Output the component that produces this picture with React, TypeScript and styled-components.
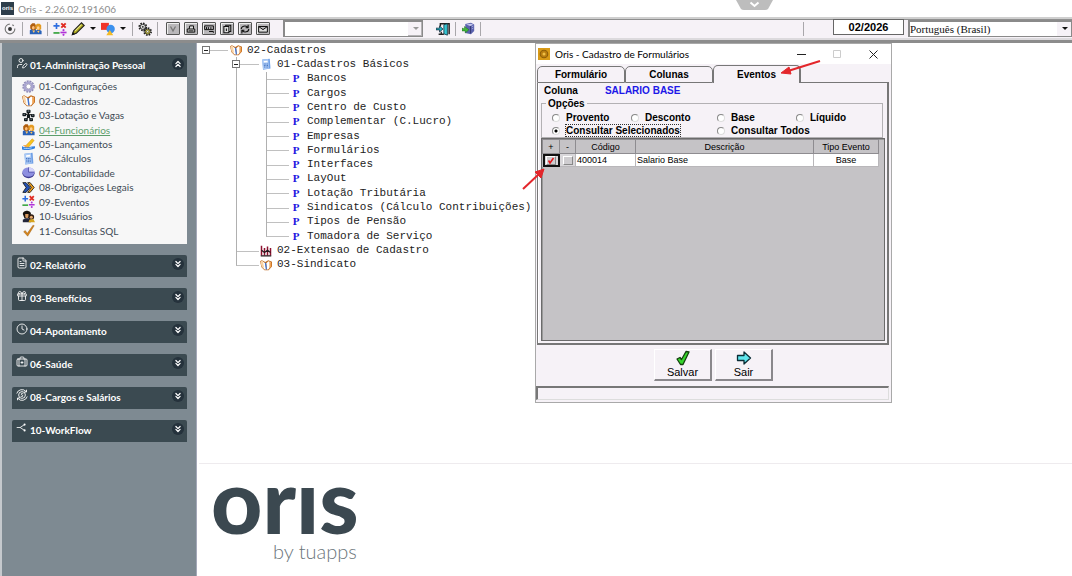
import React from "react";
import styled, { createGlobalStyle, css } from "styled-components";
import {
  BriefcaseMedical, ChevronsDown, ChevronsUp, Clock, FileText, Gift, UserPen,
} from "lucide-react";

const sans = `"Liberation Sans", Arial, sans-serif`;
const ui = `Lato, "Open Sans", sans-serif`;
const face = "#f6f2f7";

const GlobalStyle = createGlobalStyle`
  * { box-sizing: border-box; }
  html, body, #root { height: 100%; }
  body { margin: 0; background: #fff; font-family: ${sans}; overflow: hidden; }
  button { font: inherit; color: inherit; padding: 0; }
`;

/* ---------- icons ---------- */

type IconName =
  | "gear" | "book" | "org" | "people" | "hand" | "calc" | "pie" | "fast"
  | "math" | "users" | "tick" | "target" | "pencil" | "shapes" | "gears"
  | "door" | "globe" | "factory" | "salary" | "flow" | "save" | "leave"
  | "check" | "coin";

const drawings: Record<IconName, React.ReactNode> = {
  gear: (
    <>
      <circle cx="8" cy="8" r="6.6" fill="none" stroke="#8c88b4" strokeWidth="2" strokeDasharray="2.4 1.1" />
      <circle cx="8" cy="8" r="4.8" fill="none" stroke="#a9a5d0" strokeWidth="3" />
      <circle cx="8" cy="8" r="3" fill="#fff" stroke="#77739c" strokeWidth=".7" />
    </>
  ),
  book: (
    <>
      <path d="M0 3 2.500 1.500 7 4l4-2.500 5 2v6.500l-4.500 5H6L2 11z" fill="#c06a1c" />
      <path d="M.8 3.500 2.800 2.500 7 5.500 8.500 14H6.200L2.800 10.500z" fill="#fff" />
      <path d="M.8 3.500 2.800 2.500l1.200 1 1.500 8.500L2.800 10.500z" fill="#f9d3a4" />
      <path d="M8.500 5.500 11 3l3.500 1.200V9.500L11 14H9z" fill="#fff" />
      <path d="M12.500 3.500l2.500 1V10l-2.500 2.500z" fill="#f0a354" />
      <path d="M7.300 5l1.200 9" stroke="#3f73d2" strokeWidth="1.700" />
    </>
  ),
  org: (
    <>
      <path d="M8 4v5M8 6 3 7M8 6l5 2M8 9l-3 4M8 9l3 4" stroke="#111" strokeWidth="1.300" />
      <g fill="#10181d">
        <rect x="5.500" y="1" width="5" height="4" rx="1" /><rect x="0.500" y="5" width="4.500" height="4" rx="1" />
        <rect x="11" y="6" width="4.500" height="4" rx="1" /><rect x="6" y="7" width="4" height="3.500" rx="1" />
        <rect x="2.500" y="11" width="4.500" height="4" rx="1" /><rect x="9" y="11" width="4.500" height="4" rx="1" />
      </g>
      <path d="M7 2.500h2M2 6.500h1.500M12.500 7.500H14M4 12.500h1.500M10.500 12.500H12" stroke="#cfd8e0" strokeWidth=".9" />
    </>
  ),
  people: (
    <>
      <path d="M1 15V10l3-2h4l2 7zM8 15l1-5 3-1 3.500 2v4z" fill="#2a62b8" />
      <path d="M1.500 8V4L4 1.500h3L8.500 4V9L5 10.500z" fill="#b05e10" />
      <path d="M8 8V4l2-2h3l2 2v5l-3 1.500z" fill="#e39a23" />
      <ellipse cx="5.300" cy="7" rx="1.700" ry="2.200" fill="#ffc07a" /><ellipse cx="11.300" cy="7.300" rx="1.700" ry="2.200" fill="#ffcf90" />
      <path d="M4 10.500l2 3 1.500-3zM10 11l1.500 2.500L13 11z" fill="#ffc766" />
    </>
  ),
  hand: (
    <>
      <path d="M0 10c4 2 6 1 16 0v2.500c-4 2-11 3-16 1.500z" fill="#2f7fe0" />
      <path d="M2 12.500c3 .8 7 .5 10-.5" fill="none" stroke="#bfe0ff" />
      <path d="M5 9 12.500 1l2.500 2-7 8.500z" fill="#f7c41c" stroke="#c57f10" strokeWidth=".5" />
      <path d="M1 9l4-.5L8 11l-3 .8z" fill="#f3a64a" />
    </>
  ),
  calc: (
    <>
      <path d="M3 2l10-1 1 13-10 1.500z" fill="#6e9fe6" />
      <path d="M3 2l8-.8 1 12.800-8 1z" fill="#a9c9f5" />
      <path d="M5 4l5-.5.2 2L5.200 6z" fill="#fff" />
      <path d="M5 8h5.500M5.200 10h5.500M5.400 12h5.500" stroke="#3767b8" strokeWidth="1.100" strokeDasharray="1.300 .8" />
    </>
  ),
  pie: (
    <>
      <ellipse cx="8" cy="9" rx="7.500" ry="6" fill="#3d3a8f" /><ellipse cx="8" cy="7.500" rx="7.500" ry="5.800" fill="#8d8fe0" />
      <path d="M8 7.500V1.700a7.500 5.800 0 0 1 7.500 5.800z" fill="#d4d5fa" />
      <path d="M8 1.700v5.800h7" fill="none" stroke="#4340a0" strokeWidth=".9" />
    </>
  ),
  fast: (
    <>
      <path d="M1 2h4l5 6-5 6H1l4-6z" fill="#2452b5" stroke="#111" />
      <path d="M7 2h3l5 6-5 6H7l4.500-6z" fill="#f5a31b" stroke="#111" />
    </>
  ),
  math: (
    <>
      <path d="M4 1v7M.5 4.500h7" stroke="#2e6de0" strokeWidth="1.900" />
      <path d="M9.500 1.500l5 5M14.500 1.500l-5 5" stroke="#e02a20" strokeWidth="2.200" />
      <path d="M.5 12.500h7" stroke="#33a13a" strokeWidth="1.900" />
      <path d="M8.500 12h7" stroke="#b030d8" strokeWidth="1.900" /><circle cx="12" cy="9.300" r="1.200" fill="#b030d8" /><circle cx="12" cy="14.700" r="1.200" fill="#b030d8" />
    </>
  ),
  users: (
    <>
      <path d="M1 5c0-3 3-4 5-4s5 1 5 4l-2 5H3z" fill="#17110c" />
      <path d="M4 5h4v4l-2 1-2-1z" fill="#d79a62" />
      <path d="M1 15v-3l3-2h4l3 2v3z" fill="#22253a" />
      <circle cx="11.500" cy="8.500" r="3.400" fill="#2c1a10" /><circle cx="11.500" cy="9" r="1.900" fill="#e3a86d" />
      <path d="M8 15l1-3 5-1 2 4z" fill="#d5a31e" />
    </>
  ),
  tick: <path d="M2 9.500 4 8l2.500 3.500L13.500 1.500 15 2 7 15z" fill="#d8871e" stroke="#8e5410" strokeWidth=".5" />,
  target: (
    <>
      <circle cx="8" cy="8" r="5.500" fill="none" stroke="#777" strokeWidth="1.300" strokeDasharray="25 3 2 3" />
      <circle cx="8" cy="8" r="2.200" fill="#333" />
    </>
  ),
  pencil: (
    <>
      <path d="M1.500 14.500 3 10l9-9 3.200 3-9.200 9z" fill="#a9a51c" stroke="#222" strokeWidth="1.300" />
      <path d="M4.500 10.500 12 3" stroke="#efe98a" strokeWidth="1.200" /><path d="M1 15l1-3.500L4.500 14z" fill="#111" />
    </>
  ),
  shapes: (
    <>
      <rect x="0" y="1" width="9" height="8" fill="#f0342a" /><circle cx="11" cy="8" r="4.800" fill="#3b90ee" />
      <path d="M6 15l4-6 4 6z" fill="#f4bb26" />
    </>
  ),
  gears: (
    <>
      <circle cx="5.500" cy="5.500" r="4" fill="none" stroke="#222" strokeWidth="2" strokeDasharray="1.800 1.300" />
      <circle cx="5.500" cy="5.500" r="3" fill="#ddd" stroke="#222" /><circle cx="5.500" cy="5.500" r="1" fill="#222" />
      <circle cx="11" cy="11" r="4" fill="none" stroke="#222" strokeWidth="2" strokeDasharray="1.800 1.300" />
      <circle cx="11" cy="11" r="3" fill="#d8cc3a" stroke="#222" /><circle cx="11" cy="11" r="1.200" fill="#fff" stroke="#222" strokeWidth=".6" />
    </>
  ),
  door: (
    <>
      <path d="M5 5V2h10v12" fill="none" stroke="#222" strokeWidth="1.700" /><path d="M9 3l4-1v13l-4-1.500z" fill="#35c8d6" stroke="#163c48" />
      <path d="M0 7h4V4.500L8 8l-4 3.500V9H0z" fill="#1ab3c4" stroke="#123" strokeWidth=".8" /><path d="M3 14h6M6 11v3" stroke="#222" strokeWidth="1.500" />
    </>
  ),
  globe: (
    <>
      <path d="M4 2.500 11 1l4 2v8l-4 4-7-1.500z" fill="#5b62ae" /><path d="M5 3l6-1 3 1.500-4 1.500z" fill="#c5c9ec" />
      <path d="M10.500 5v9" stroke="#2c2f68" /><path d="M12 6l2-1M12 8.500l2-1" stroke="#a9aee0" />
      <path d="M0 7.500l3 1V5.500L8.500 9.500 4 13.500v-2.500L0 11z" fill="#42b83c" stroke="#1e6a1e" strokeWidth=".6" />
    </>
  ),
  factory: (
    <>
      <path d="M2 1v13M6 4v10M10 2v12M14 4v10" stroke="#8e1230" strokeWidth="2" />
      <path d="M1 14.500h14M2 7l4 3 4-3 4 3" fill="none" stroke="#22181c" strokeWidth="1.500" />
    </>
  ),
  salary: (
    <g fill="none" stroke="currentColor" strokeWidth="1.200">
      <circle cx="8" cy="8" r="4.500" /><path d="M1 6a7.200 7.200 0 0 1 12.500-2.500M15 10A7.200 7.200 0 0 1 2.500 12.500M14 1v3h-3M2 15v-3h3" />
      <path d="M9.800 6.300c-3-1.500-4 1-1.800 1.700s1.200 3-1.800 1.700" />
    </g>
  ),
  flow: (
    <>
      <path d="M1 8h5l6-4M6 8l6 4" fill="none" stroke="currentColor" strokeWidth="1.200" />
      <circle cx="12.500" cy="3.800" r="1.500" fill="currentColor" /><circle cx="12.500" cy="12.200" r="1.500" fill="currentColor" />
    </>
  ),
  save: <path d="M2 9 5 7.500l1.500 2L11 1.500l3 .5L8 14.500H5.500z" fill="#35d62c" stroke="#14400f" strokeWidth="1.300" strokeLinejoin="round" />,
  leave: <path d="M1.500 5.500h6.500V2L14.500 8 8 14v-3.500H1.500z" fill="#5fe6ee" stroke="#0b2d36" strokeWidth="1.300" strokeLinejoin="round" />,
  check: <path d="M3 7l3 5 7-10" fill="none" stroke="#e3161b" strokeWidth="3" />,
  coin: (
    <>
      <rect width="16" height="16" fill="#d89a17" /><circle cx="8" cy="8" r="5" fill="#b87d10" stroke="#8e5e08" strokeWidth="1.500" /><circle cx="8" cy="8" r="2" fill="#f0bf45" />
    </>
  ),
};

const Svg = styled.svg<{ $size: number }>`
  display: block;
  flex: none;
  width: ${(p) => p.$size}px;
  height: ${(p) => p.$size}px;
`;
const Icon = ({ name, size = 13 }: { name: IconName; size?: number }) => (
  <Svg viewBox="0 0 16 16" $size={size} aria-hidden="true">{drawings[name]}</Svg>
);

/* ---------- application frame ---------- */

const Shell = styled.div`
  display: flex;
  flex-direction: column;
  min-height: 100vh;
`;
const TitleBar = styled.header`
  position: relative;
  display: flex;
  align-items: center;
  gap: 4px;
  height: 17px;
  padding-left: 1px;
  font: 10px ${ui};
  color: #8c8c8c;
`;
const AppBadge = styled.span`
  width: 13px;
  height: 13px;
  background: #2d3e4a;
  color: #fff;
  font: bold 6px/12px ${sans};
  text-align: center;
`;
const PullTab = styled.button`
  position: absolute;
  top: 0;
  left: 736px;
  width: 37px;
  height: 11px;
  border: 0;
  background: none;
`;

const Toolbar = styled.div`
  display: flex;
  align-items: center;
  gap: 2px;
  height: 26px;
  padding: 1px 0 3px 2px;
  border-top: 2px solid #cfcfcf;
  border-bottom: 3px solid #8c8c8c;
  background: ${face};
  box-shadow: inset 0 1px #8f8f8f, inset 0 -2px #dcdadd;
`;
const ToolButton = styled.button<{ $raised?: boolean }>`
  display: grid;
  place-items: center;
  flex: none;
  width: 16px;
  height: 16px;
  border: 0;
  background: none;
  ${(p) => p.$raised && css`
    width: 14px;
    height: 13px;
    margin: 0 1px;
    border: 1px solid #555;
    border-radius: 1px;
    background: #b9b7ba;
    box-shadow: inset 1px 1px #eee;
  `}
`;
const MenuButton = styled.button`
  width: 10px;
  height: 16px;
  display: grid;
  place-items: center;
  border: 0;
  background: none;
  &::after {
    content: "";
    border: 3px solid transparent;
    border-top-color: #111;
    border-bottom: 0;
  }
`;
const Divider = styled.span`
  flex: none;
  width: 1px;
  height: 14px;
  margin: 0 2px;
  background: #a9a7ab;
`;
const RaisedGroup = styled.div`
  display: flex;
  gap: 2px;
  margin: 0 10px 0 3px;
`;
const ExitGroup = styled.div`
  margin-left: 10px;
`;
const Spacer = styled.span`
  flex: 1;
`;
const Combo = styled.div<{ $width: number; $muted?: boolean }>`
  position: relative;
  flex: none;
  width: ${(p) => p.$width}px;
  height: 17px;
  border: 1px solid #8a8a8a;
  border-width: 2px 1px 1px 2px;
  background: #fff;
  select {
    display: block;
    width: 100%;
    height: 100%;
    padding: 0;
    border: 0;
    outline: 0;
    appearance: none;
    background: none;
    color: #111;
    font: 11px "Liberation Serif", "Times New Roman", serif;
  }
  &::before {
    content: "";
    position: absolute;
    inset: 0 0 0 auto;
    width: 13px;
    background: ${face};
    border: 1px solid ${(p) => (p.$muted ? "#b5b3b6" : face)};
    border-width: 0 1px 1px 0;
    pointer-events: none;
  }
  &::after {
    content: "";
    position: absolute;
    right: 3px;
    top: 5px;
    border: 3px solid transparent;
    border-top-color: ${(p) => (p.$muted ? "#999" : "#111")};
    border-bottom: 0;
    pointer-events: none;
  }
`;
const Period = styled.input`
  width: 71px;
  height: 16px;
  margin: 0 2px 3px 25px;
  padding: 0;
  border: 1px solid #666;
  background: #fff;
  color: #000;
  text-align: center;
  font: bold 11px ${sans};
`;

const Workspace = styled.div`
  display: flex;
  flex: 1;
`;

/* ---------- sidebar ---------- */

const Sidebar = styled.nav`
  display: flex;
  flex-direction: column;
  flex: none;
  gap: 11px;
  width: 197px;
  padding: 12px 9px 12px 10px;
  border-left: 2px solid #c5c9cd;
  border-right: 1px solid #a4a8b8;
  background: #7e8a92;
`;
const Section = styled.section``;
const SectionButton = styled.button`
  display: flex;
  align-items: center;
  width: 100%;
  height: 22px;
  padding: 0 3px 0 4px;
  border: 0;
  border-radius: 2px 2px 0 0;
  background: #3b4a51;
  color: #fff;
  text-align: left;
  font: bold 10px ${ui};
`;
const SectionMark = styled.span`
  display: flex;
  width: 14px;
  height: 20px;
  padding-top: 1px;
`;
const SectionTitle = styled.span`
  flex: 1;
  padding-bottom: 2px;
`;
const Toggle = styled.span`
  display: grid;
  place-items: center;
  width: 12px;
  height: 12px;
  margin-bottom: 4px;
  border-radius: 50%;
  background: #25323c;
`;
const Items = styled.ul`
  display: grid;
  grid-auto-rows: 1fr;
  height: 167px;
  margin: 0;
  padding: 2px 0 6px 10px;
  list-style: none;
  background: #f7f7f7;
`;
const Item = styled.li`
  display: flex;
  align-items: center;
  gap: 4px;
`;
const ItemLink = styled.a<{ $active?: boolean }>`
  color: ${(p) => (p.$active ? "#5d9e6c" : "#3d4a55")};
  text-decoration: ${(p) => (p.$active ? "underline" : "none")};
  font: 10px/14px ${ui};
`;

const sidebarItems: [IconName, string][] = [
  ["gear", "01-Configurações"], ["book", "02-Cadastros"], ["org", "03-Lotação e Vagas"],
  ["people", "04-Funcionários"], ["hand", "05-Lançamentos"], ["calc", "06-Cálculos"],
  ["pie", "07-Contabilidade"], ["fast", "08-Obrigações Legais"], ["math", "09-Eventos"],
  ["users", "10-Usuários"], ["tick", "11-Consultas SQL"],
];
const thin = { size: 12, strokeWidth: 1.7 };
const closedSections: [React.ReactNode, string][] = [
  [<FileText {...thin} />, "02-Relatório"], [<Gift {...thin} />, "03-Benefícios"],
  [<Clock {...thin} />, "04-Apontamento"], [<BriefcaseMedical {...thin} />, "06-Saúde"],
  [<Icon name="salary" size={12} />, "08-Cargos e Salários"], [<Icon name="flow" size={11} />, "10-WorkFlow"],
];
const SectionHeader = ({ mark, title, open }: { mark: React.ReactNode; title: string; open?: boolean }) => (
  <SectionButton aria-expanded={!!open}>
    <SectionMark>{mark}</SectionMark>
    <SectionTitle>{title}</SectionTitle>
    <Toggle>{open ? <ChevronsUp size={10} strokeWidth={3} /> : <ChevronsDown size={10} strokeWidth={3} />}</Toggle>
  </SectionButton>
);

/* ---------- tree ---------- */

const Main = styled.main`
  position: relative;
  display: flex;
  flex-direction: column;
  flex: 1;
  min-width: 0;
`;
const Tree = styled.ul`
  display: grid;
  grid-auto-rows: 1fr;
  height: 229px;
  margin: 0 0 191px;
  padding: 0 0 0 9px;
  list-style: none;
`;
const TreeRow = styled.li`
  display: flex;
  align-items: center;
  color: #222;
  font: 11px/13px "Liberation Mono", "Courier New", monospace;
  white-space: pre;
`;
const Indent = styled.span<{ $line?: boolean }>`
  align-self: stretch;
  width: 30px;
  border-left: 1px solid #b0b0b0;
`;
const Branch = styled.span<{ $shape: "root" | "mid" | "last" }>`
  position: relative;
  align-self: stretch;
  width: 24px;
  &::before, &::after {
    content: "";
    position: absolute;
    left: 0;
    top: 0;
  }
  &::before {
    width: 22px;
    height: 50%;
    border-bottom: 1px solid #c0c0c0;
    ${(p) => p.$shape !== "root" && "border-left: 1px solid #b0b0b0;"}
  }
  &::after {
    top: 50%;
    height: 50%;
    ${(p) => p.$shape === "mid" && "border-left: 1px solid #b0b0b0;"}
  }
`;
const Blank = styled.span`
  width: 30px;
`;
const Expander = styled.button`
  position: absolute;
  z-index: 1;
  left: -4px;
  top: 3px;
  width: 8px;
  height: 8px;
  border: 1px solid #777;
  background: linear-gradient(#222, #222) center / 4px 1px no-repeat #fff;
`;
const NodeIcon = styled.span`
  display: grid;
  place-items: center;
  width: 12px;
  margin-right: 5px;
`;
const ProgramMark = styled.b`
  color: #2014e0;
  font: bold 11px/13px "Liberation Serif", serif;
`;

type Node = {
  label: string;
  level: 0 | 1 | 2;
  icon?: IconName;
  last?: boolean;
  open?: boolean;
};
const programs = [
  "Bancos", "Cargos", "Centro de Custo", "Complementar (C.Lucro)", "Empresas", "Formulários", "Interfaces",
  "LayOut", "Lotação Tributária", "Sindicatos (Cálculo Contribuições)", "Tipos de Pensão", "Tomadora de Serviço",
];
const nodes: Node[] = [
  { label: "02-Cadastros", level: 0, icon: "book", open: true },
  { label: "01-Cadastros Básicos", level: 1, icon: "calc", open: true },
  ...programs.map((label, i): Node => ({ label, level: 2, last: i === programs.length - 1 })),
  { label: "02-Extensao de Cadastro", level: 1, icon: "factory" },
  { label: "03-Sindicato", level: 1, icon: "book", last: true },
];

const Brand = styled.footer`
  flex: 1;
  margin-left: 2px;
  padding: 0 12px;
  border-top: 1px solid #eeebee;
  color: #3b4850;
`;
const Wordmark = styled.div`
  font: 900 89px/72px Lato, sans-serif;
`;
const Byline = styled.div`
  padding-left: 62px;
  color: #6c757b;
  font: 300 20px/30px Lato, sans-serif;
`;

/* ---------- dialog ---------- */

const Dialog = styled.section`
  position: absolute;
  z-index: 2;
  left: 338px;
  top: 0;
  display: flex;
  flex-direction: column;
  width: 357px;
  border: 1px solid #a9a9a9;
  background: ${face};
  color: #000;
`;
const DialogBar = styled.header`
  display: flex;
  align-items: center;
  height: 20px;
  padding: 0 8px 0 2px;
  background: #fff;
  font: 10px ${ui};
  h2 { flex: 1; margin: 0 0 0 5px; font: inherit; }
`;
const WindowButton = styled.button<{ $dim?: boolean }>`
  display: grid;
  place-items: center;
  width: 20px;
  height: 18px;
  margin-left: 16px;
  border: 0;
  background: none;
  color: ${(p) => (p.$dim ? "#ccc" : "#222")};
`;
const Tabs = styled.div`
  display: flex;
  align-items: flex-end;
  height: 19px;
  padding: 1px 0 0 1px;
`;
const Tab = styled.button<{ $active?: boolean }>`
  width: 88px;
  height: ${(p) => (p.$active ? 18 : 17)}px;
  border: 1px solid #777;
  border-right-width: ${(p) => (p.$active ? 2 : 1)}px;
  border-bottom: ${(p) => (p.$active ? 0 : 1)}px solid #777;
  border-radius: 5px 5px 0 0;
  background: ${face};
  font: bold 10px ${sans};
`;
const TabRule = styled.span`
  flex: 1;
  margin-right: 2px;
  border-bottom: 1px solid #777;
`;
const Panel = styled.div`
  margin: 0 2px 0 1px;
  padding: 2px 2px 2px 3px;
  border: solid #777;
  border-width: 0 2px 2px 1px;
  box-shadow: inset 1px 0 #fff;
`;
const ColumnLine = styled.div`
  display: flex;
  gap: 27px;
  padding-left: 3px;
  font: bold 10px/12px ${sans};
  strong { color: #2018e8; }
`;
const Options = styled.fieldset`
  display: grid;
  grid-template-columns: 79px 86px 79px 1fr;
  grid-auto-rows: 13px;
  margin: 2px 2px 0 0;
  padding: 3px 2px 0 10px;
  border: 1px solid #b3b1b4;
  font: bold 10px/13px ${sans};
  legend { height: 9px; padding: 0 2px; margin-left: -6px; line-height: 9px; }
`;
const Option = styled.label<{ $wide?: boolean; $focused?: boolean }>`
  display: flex;
  align-items: center;
  gap: 6px;
  grid-column: span ${(p) => (p.$wide ? 2 : 1)};
  white-space: nowrap;
  input {
    appearance: none;
    width: 8px;
    height: 8px;
    margin: 0;
    border: 1px solid #888;
    border-right-color: #ddd;
    border-bottom-color: #ddd;
    border-radius: 50%;
    background: #fff;
  }
  input:checked { background: radial-gradient(#000 1px, #fff 2px); }
  span { line-height: 11px; ${(p) => p.$focused && "outline: 1px dotted #333;"} }
`;
const GridArea = styled.div`
  height: 203px;
  border: 1px solid #6b6b6b;
  background: #c5c3c6;
  box-shadow: inset 1px 1px #999;
`;
const Grid = styled.table`
  width: 336px;
  border-collapse: collapse;
  table-layout: fixed;
  font: 9px/12px ${sans};
  th { height: 14px; padding: 0; border: 1px solid #8e8c90; background: #c5c3c6; font-weight: normal; }
  td { height: 13px; padding: 0 1px; border: 1px solid #b9b7ba; background: #fff; }
`;
const CheckCell = styled.td<{ $focused?: boolean }>`
  && { background: #d9d7da; ${(p) => p.$focused && "outline: 2px solid #111; outline-offset: -2px;"} }
`;
const Box = styled.label`
  position: relative;
  display: grid;
  place-items: center;
  width: 10px;
  height: 9px;
  margin: 0 auto;
  border: 1px solid #888;
  border-top-color: #fff;
  border-left-color: #fff;
  background: #cfcdd0;
  input { position: absolute; inset: 0; margin: 0; width: 100%; height: 100%; opacity: 0; }
`;
const Actions = styled.div`
  display: flex;
  justify-content: center;
  gap: 3px;
  padding: 4px 0 5px;
`;
const Action = styled.button`
  display: flex;
  flex-direction: column;
  align-items: center;
  width: 58px;
  height: 32px;
  border: 1px solid #fff;
  border-right: 2px solid #8a888c;
  border-bottom: 2px solid #8a888c;
  background: ${face};
  font: 11px/13px ${sans};
`;
const StatusBar = styled.div`
  height: 14px;
  margin: 0 2px 2px 0;
  border: 1px solid #ddd;
  border-top: 2px solid #777;
  border-left: 2px solid #777;
`;
const Pointer = styled.svg`
  position: absolute;
  z-index: 3;
  left: 324px;
  top: 14px;
  width: 310px;
  height: 140px;
  pointer-events: none;
`;

const toolGlyphs = [
  <path d="M4 4l4 7 4-7" fill="none" stroke="#777" strokeWidth="2" />,
  <path d="M2 8h12v5H2zM5 8l1-5h6v5M4 11h8" fill="#ddd" stroke="#111" strokeWidth="1.600" />,
  <path d="M1 3h14v6H1zM4 5v3M7 5v3M11 5v3M8 12h7v2" fill="none" stroke="#111" strokeWidth="1.600" />,
  <path d="M3 4h8v10H3zM6 4V2h8v10h-3M7 7v4" fill="#ddd" stroke="#111" strokeWidth="1.700" />,
  <path d="M2 8c0-5 7-6 10-3M14 8c0 5-7 6-10 3M13 1v5H9M3 15v-5h4" fill="none" stroke="#111" strokeWidth="1.800" />,
  <path d="M1 4h14v9H1zM1 4l7 5 7-5" fill="#ddd" stroke="#111" strokeWidth="1.600" />,
];
const toolNames = ["Filtro", "Imprimir", "Teclado", "Copiar", "Atualizar", "Mensagem"];

export default function App() {
  return (
    <Shell>
      <GlobalStyle />
      <TitleBar>
        <AppBadge>oris</AppBadge>
        <span>Oris - 2.26.02.191606</span>
        <PullTab aria-label="Expandir">
          <svg width="37" height="11" viewBox="0 0 37 11">
            <path d="M0 0h37l-5 9q-1 1-3 1H8q-2 0-3-1z" fill="#bdbdbd" />
            <path d="M14.500 2.500l4 3.500 4-3.500" fill="none" stroke="#fff" strokeWidth="2" />
          </svg>
        </PullTab>
      </TitleBar>

      <Toolbar>
        <ToolButton aria-label="Início"><Icon name="target" size={14} /></ToolButton>
        <Divider />
        <ToolButton aria-label="Funcionários"><Icon name="people" /></ToolButton>
        <Divider />
        <ToolButton aria-label="Eventos"><Icon name="math" size={14} /></ToolButton>
        <ToolButton aria-label="Editar"><Icon name="pencil" size={14} /></ToolButton>
        <MenuButton aria-label="Opções de edição" />
        <ToolButton aria-label="Formas"><Icon name="shapes" size={14} /></ToolButton>
        <MenuButton aria-label="Opções de formas" />
        <Divider />
        <ToolButton aria-label="Configurações"><Icon name="gears" size={14} /></ToolButton>
        <Divider />
        <RaisedGroup>
          {toolGlyphs.map((glyph, i) => (
            <ToolButton key={toolNames[i]} $raised aria-label={toolNames[i]}>
              <Svg viewBox="0 0 16 16" $size={10}>{glyph}</Svg>
            </ToolButton>
          ))}
        </RaisedGroup>
        <Combo $width={140} $muted><select aria-label="Busca"><option></option></select></Combo>
        <ExitGroup>
          <ToolButton aria-label="Sair do sistema"><Icon name="door" size={14} /></ToolButton>
        </ExitGroup>
        <Divider />
        <ToolButton aria-label="Conexão"><Icon name="globe" /></ToolButton>
        <Divider />
        <Spacer />
        <Divider />
        <Period aria-label="Período" defaultValue="02/2026" />
        <Combo $width={164}><select aria-label="Idioma"><option>Português (Brasil)</option></select></Combo>
      </Toolbar>

      <Workspace>
        <Sidebar>
          <Section>
            <SectionHeader open mark={<UserPen {...thin} />} title="01-Administração Pessoal" />
            <Items>
              {sidebarItems.map(([icon, label]) => (
                <Item key={label}>
                  <Icon name={icon} />
                  <ItemLink href="#" $active={label.startsWith("04")}>{label}</ItemLink>
                </Item>
              ))}
            </Items>
          </Section>
          {closedSections.map(([mark, title]) => (
            <Section key={title}><SectionHeader mark={mark} title={title} /></Section>
          ))}
        </Sidebar>

        <Main>
          <Tree>
            {nodes.map((n) => (
              <TreeRow key={n.label}>
                {n.level > 0 && <Blank />}
                {n.level > 1 && <Indent />}
                <Branch $shape={n.level === 0 ? "root" : n.last ? "last" : "mid"}>
                  {n.open && <Expander aria-label={`Recolher ${n.label}`} />}
                </Branch>
                <NodeIcon>{n.icon ? <Icon name={n.icon} size={12} /> : <ProgramMark>P</ProgramMark>}</NodeIcon>
                {n.label}
              </TreeRow>
            ))}
          </Tree>
          <Brand>
            <Wordmark aria-label="oris">orıs</Wordmark>
            <Byline>by tuapps</Byline>
          </Brand>

          <Dialog role="dialog" aria-labelledby="dialog-title">
            <DialogBar>
              <Icon name="coin" size={12} />
              <h2 id="dialog-title">Oris - Cadastro de Formulários</h2>
              <WindowButton aria-label="Minimizar"><svg width="9" height="9"><path d="M0 4.500h9" stroke="currentColor" /></svg></WindowButton>
              <WindowButton aria-label="Maximizar" $dim><svg width="9" height="9"><path d="M.5.5h7v7h-7z" fill="none" stroke="currentColor" /></svg></WindowButton>
              <WindowButton aria-label="Fechar"><svg width="9" height="9"><path d="M.5.5l8 8M8.500.5l-8 8" stroke="currentColor" /></svg></WindowButton>
            </DialogBar>
            <Tabs role="tablist">
              <Tab role="tab">Formulário</Tab>
              <Tab role="tab">Colunas</Tab>
              <Tab role="tab" $active aria-selected="true">Eventos</Tab>
              <TabRule />
            </Tabs>
            <Panel>
              <ColumnLine><span>Coluna</span><strong>SALARIO BASE</strong></ColumnLine>
              <Options>
                <legend>Opções</legend>
                <Option><input type="radio" name="option" /><span>Provento</span></Option>
                <Option><input type="radio" name="option" /><span>Desconto</span></Option>
                <Option><input type="radio" name="option" /><span>Base</span></Option>
                <Option><input type="radio" name="option" /><span>Líquido</span></Option>
                <Option $wide $focused><input type="radio" name="option" defaultChecked /><span>Consultar Selecionados</span></Option>
                <Option $wide><input type="radio" name="option" /><span>Consultar Todos</span></Option>
              </Options>
              <GridArea>
                <Grid>
                  <colgroup><col width="17" /><col width="16" /><col width="60" /><col width="178" /><col width="65" /></colgroup>
                  <thead>
                    <tr><th>+</th><th>-</th><th>Código</th><th>Descrição</th><th>Tipo Evento</th></tr>
                  </thead>
                  <tbody>
                    <tr>
                      <CheckCell $focused><Box><input type="checkbox" aria-label="Adicionar" defaultChecked /><Icon name="check" size={8} /></Box></CheckCell>
                      <CheckCell><Box><input type="checkbox" aria-label="Remover" /></Box></CheckCell>
                      <td>400014</td>
                      <td>Salario Base</td>
                      <td align="center">Base</td>
                    </tr>
                  </tbody>
                </Grid>
              </GridArea>
            </Panel>
            <Actions>
              <Action><Icon name="save" size={16} />Salvar</Action>
              <Action><Icon name="leave" size={16} />Sair</Action>
            </Actions>
            <StatusBar />
          </Dialog>

          <Pointer viewBox="0 0 310 140" aria-hidden="true">
            <g stroke="#e3262b" strokeWidth="2" fill="#e3262b">
              <path d="M299 4 267 14" /><path d="M260 16l8-6 2 7z" strokeWidth="1" />
              <path d="M2 132 18 117" /><path d="M23 112l-3 9-6-6z" strokeWidth="1" />
            </g>
          </Pointer>
        </Main>
      </Workspace>
    </Shell>
  );
}
